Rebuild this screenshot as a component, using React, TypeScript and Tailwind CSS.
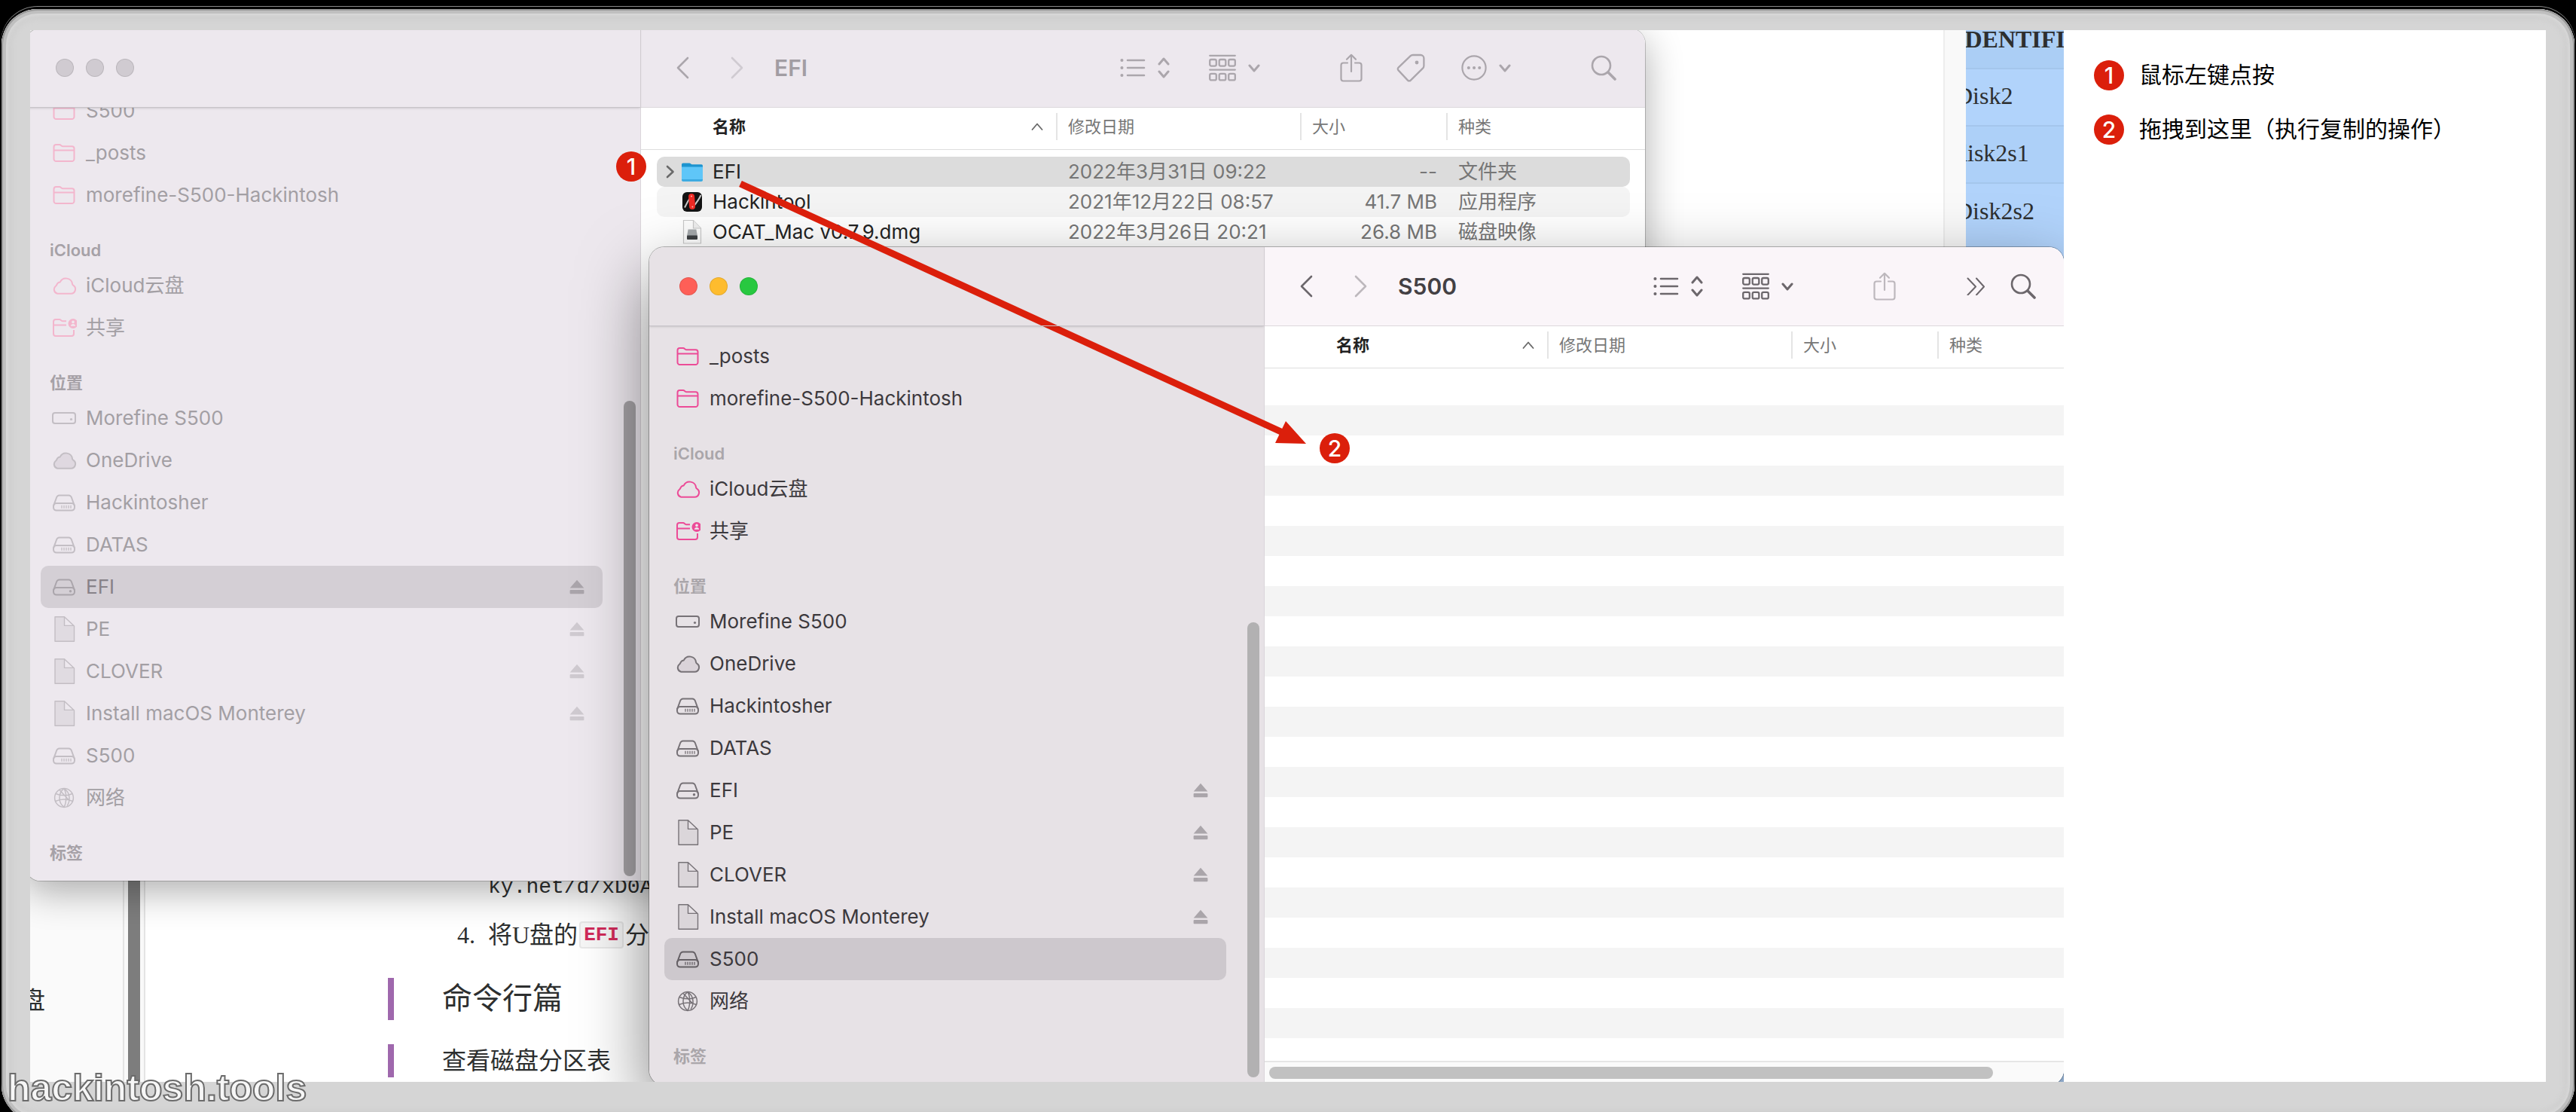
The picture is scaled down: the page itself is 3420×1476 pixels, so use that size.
import React from "react";

type IconName = "folder" | "cloud" | "cloudFilled" | "shared" | "internal" | "drive" | "driveDot" | "doc" | "globe";
type Item = { label: string; icon: IconName; pink?: boolean; eject?: boolean };
type Section = { title?: string; items: Item[] };

const favourites: Item[] = [
  { label: "_posts", icon: "folder", pink: true },
  { label: "morefine-S500-Hackintosh", icon: "folder", pink: true },
];

const commonSections: Section[] = [
  {
    title: "iCloud",
    items: [
      { label: "iCloud云盘", icon: "cloud", pink: true },
      { label: "共享", icon: "shared", pink: true },
    ],
  },
  {
    title: "位置",
    items: [
      { label: "Morefine S500", icon: "internal" },
      { label: "OneDrive", icon: "cloudFilled" },
      { label: "Hackintosher", icon: "drive" },
      { label: "DATAS", icon: "drive" },
      { label: "EFI", icon: "driveDot", eject: true },
      { label: "PE", icon: "doc", eject: true },
      { label: "CLOVER", icon: "doc", eject: true },
      { label: "Install macOS Monterey", icon: "doc", eject: true },
      { label: "S500", icon: "drive" },
      { label: "网络", icon: "globe" },
    ],
  },
  { title: "标签", items: [] },
];

const backSections: Section[] = [
  { items: [{ label: "S500", icon: "folder", pink: true }, ...favourites] },
  ...commonSections,
];
const frontSections: Section[] = [{ items: favourites }, ...commonSections];

function SidebarIcon({ name }: { name: IconName }) {
  return (
    <svg viewBox="0 0 34 34" className="size-[34px] shrink-0" fill="none" stroke="currentColor" strokeWidth="2" strokeLinejoin="round" aria-hidden="true">
      {name === "folder" && (
        <path d="M3.5 9a3 3 0 0 1 3-3h4.6c1.6 0 2.2 2.2 4 2.2h12.4a3 3 0 0 1 3 3V25a3 3 0 0 1-3 3h-21a3 3 0 0 1-3-3zM3.5 13.6h27" />
      )}
      {(name === "cloud" || name === "cloudFilled") && (
        <path
          d="M8.2 27.8h18a6 6 0 0 0 3-11.1c-.6-.4-1-.8-1.1-1.6a8.6 8.6 0 0 0-16.3-2.7 5 5 0 0 0-4.4 3.4c-.2.8-.6 1.2-1.2 1.7a5.8 5.8 0 0 0 2 10.3z"
          fill={name === "cloudFilled" ? "rgba(120,110,120,0.12)" : "none"}
        />
      )}
      {name === "shared" && (
        <>
          <path d="M20 8.2h-5c-1.8 0-2.4-2.2-4-2.2H6a3 3 0 0 0-3 3v16a3 3 0 0 0 3 3h21a3 3 0 0 0 3-3v-5M3 13.6h17" />
          <circle cx="29" cy="11.5" r="6.5" fill="currentColor" stroke="none" />
          <circle cx="29" cy="9.4" r="1.8" fill="#efe8ee" stroke="none" />
          <path d="M25.8 14.8c.3-2 1.6-2.9 3.2-2.9s2.9.9 3.2 2.9z" fill="#efe8ee" stroke="none" />
        </>
      )}
      {name === "internal" && (
        <>
          <rect x="2" y="10" width="30" height="14" rx="3" />
          <circle cx="26.5" cy="18.5" r="1.6" fill="currentColor" stroke="none" />
        </>
      )}
      {(name === "drive" || name === "driveDot") && (
        <>
          <path d="M3 21.5 7.2 10a4 4 0 0 1 3.6-2.6h12.4a4 4 0 0 1 3.6 2.6L31 21.5" />
          <rect x="3" y="18" width="28" height="9.6" rx="4" />
          {name === "drive" ? <path d="M14 20.8v4M17 20.8v4M20 20.8v4M23 20.8v4M26 20.8v4" strokeWidth="1.3" /> : <circle cx="25.5" cy="22.8" r="1.7" fill="currentColor" stroke="none" />}
        </>
      )}
      {name === "doc" && (
        <path d="M5 .8h12.5L30.5 13v20.2H5zM17.5.8v11.6h13" strokeWidth="1.4" fill="rgba(120,110,120,0.10)" />
      )}
      {name === "globe" && (
        <g strokeWidth="1.5">
          <circle cx="17" cy="17" r="12.4" />
          <path d="M17 4.6c-8 6-8 19 0 24.8M17 4.6c3.6 6 3.6 18 0 24.8M17 4.6c8 5 9 16 4 23M6 11.5c7 3 16 3 22 0M5.5 21.5c7-3 16-3 23 0M11 6.5l12 13" />
        </g>
      )}
    </svg>
  );
}

const Eject = () => (
  <svg viewBox="0 0 20 20" className="size-5" fill="currentColor" aria-hidden="true">
    <path d="M10 .8 19.3 11.6H.7z" />
    <rect x=".6" y="14" width="18.8" height="5.2" rx="1" />
  </svg>
);

const ChevronLeft = () => (
  <svg viewBox="0 0 36 36" className="size-9" fill="none" stroke="currentColor" strokeWidth="2.6" strokeLinecap="round" strokeLinejoin="round" aria-hidden="true">
    <path d="M25 5 12 18l13 13" />
  </svg>
);
const ChevronRight = () => (
  <svg viewBox="0 0 36 36" className="size-9" fill="none" stroke="currentColor" strokeWidth="2.6" strokeLinecap="round" strokeLinejoin="round" aria-hidden="true">
    <path d="m12 5 13 13-13 13" />
  </svg>
);
const ChevronDown = () => (
  <svg viewBox="0 0 16 16" className="size-4" fill="none" stroke="currentColor" strokeWidth="3" strokeLinecap="round" strokeLinejoin="round" aria-hidden="true">
    <path d="m2 5 6 7 6-7" />
  </svg>
);
const UpDown = () => (
  <svg viewBox="0 0 16 28" className="h-7 w-4" fill="none" stroke="currentColor" strokeWidth="3" strokeLinecap="round" strokeLinejoin="round" aria-hidden="true">
    <path d="m2 9 6-7 6 7M2 19l6 7 6-7" />
  </svg>
);
const ListIcon = () => (
  <svg viewBox="0 0 34 28" className="h-7 w-[34px]" fill="none" stroke="currentColor" strokeWidth="2.6" strokeLinecap="round" aria-hidden="true">
    <path d="M10 4h22M10 14h22M10 24h22" />
    <path d="M2.4 4h.1M2.4 14h.1M2.4 24h.1" strokeWidth="4" />
  </svg>
);
const GroupIcon = () => (
  <svg viewBox="0 0 36 36" className="size-9" fill="none" stroke="currentColor" strokeWidth="2.3" strokeLinecap="round" aria-hidden="true">
    <path d="M1.2 1.8h33.6M1.2 20.6h33.6" />
    {[1.2, 13.7, 26.2].map((x) => (
      <g key={x}>
        <rect x={x} y="7" width="8.6" height="8.6" rx="2" />
        <rect x={x} y="25.8" width="8.6" height="8.6" rx="2" />
      </g>
    ))}
  </svg>
);
const ShareIcon = () => (
  <svg viewBox="0 0 30 38" className="h-[38px] w-[30px]" fill="none" stroke="currentColor" strokeWidth="2.2" strokeLinecap="round" strokeLinejoin="round" aria-hidden="true">
    <path d="M10 12.5H4.5a3 3 0 0 0-3 3v18a3 3 0 0 0 3 3h21a3 3 0 0 0 3-3v-18a3 3 0 0 0-3-3H20M15 24V1.8M9 7.8l6-6 6 6" />
  </svg>
);
const TagIcon = () => (
  <svg viewBox="0 0 38 38" className="size-[38px]" fill="none" stroke="currentColor" strokeWidth="2.3" strokeLinejoin="round" aria-hidden="true">
    <path d="M2.6 18.6 18.4 3.4A5 5 0 0 1 21.8 2H32a4.4 4.4 0 0 1 4.4 4.4v9.8a5 5 0 0 1-1.4 3.4L18.8 35.6a2.6 2.6 0 0 1-3.8 0L2.6 22.4a2.6 2.6 0 0 1 0-3.8z" />
    <circle cx="27" cy="12" r="2.4" fill="currentColor" stroke="none" />
  </svg>
);
const MoreIcon = () => (
  <svg viewBox="0 0 34 34" className="size-[34px]" fill="none" stroke="currentColor" strokeWidth="2.2" strokeLinecap="round" aria-hidden="true">
    <circle cx="17" cy="17" r="15.6" />
    <path d="M9.8 17h.1M17 17h.1M24.2 17h.1" strokeWidth="4" />
  </svg>
);
const DoubleChevron = () => (
  <svg viewBox="0 0 24 24" className="size-6" fill="none" stroke="currentColor" strokeWidth="2" strokeLinecap="round" strokeLinejoin="round" aria-hidden="true">
    <path d="m1.5 1.5 10.5 11-10.5 11M13 1.5l10 11-10 11" />
  </svg>
);
const SearchIcon = () => (
  <svg viewBox="0 0 34 34" className="size-[34px]" fill="none" stroke="currentColor" strokeWidth="2.6" strokeLinecap="round" aria-hidden="true">
    <circle cx="14" cy="14" r="12" />
    <path d="m23 23 9 9" strokeWidth="3.6" />
  </svg>
);
const SortCaret = () => (
  <svg viewBox="0 0 16 10" className="h-2.5 w-4" fill="none" stroke="#6a6a6a" strokeWidth="1.8" strokeLinecap="round" strokeLinejoin="round" aria-hidden="true">
    <path d="m1.5 9 6.5-7.5L14.5 9" />
  </svg>
);

const FolderFile = () => (
  <svg viewBox="0 0 30 30" className="size-[30px]" aria-hidden="true">
    <path d="M1 5.2A1.8 1.8 0 0 1 2.8 3.4h8.4c.8 0 1.2.4 1.8.9.8.7 1.4 1 2.4 1h11.8A1.8 1.8 0 0 1 29 7.1V12H1z" fill="#1d94cf" />
    <path d="M1 8.6h28v17.2a2 2 0 0 1-2 2H3a2 2 0 0 1-2-2z" fill="#5fc6f8" />
    <path d="M1 25v.8a2 2 0 0 0 2 2h24a2 2 0 0 0 2-2V25z" fill="#3aa9e0" />
  </svg>
);
const HackintoolFile = () => (
  <svg viewBox="0 0 30 30" className="size-[30px]" aria-hidden="true">
    <rect x="2" y="2" width="26" height="26" rx="6" fill="#141414" />
    <path d="M5 22.5C8 16 11 11 14 7M16 22c4-5 8-10 10.5-16" stroke="#c9c9c9" strokeWidth="2" fill="none" />
    <rect x="10.6" y="4" width="8" height="21" rx="4" fill="#ee2a24" transform="rotate(-4 15 15)" />
    <circle cx="14" cy="7.5" r="1" fill="#ffb3ae" />
    <circle cx="15.4" cy="21.5" r="1" fill="#ffb3ae" />
  </svg>
);
const DmgFile = () => (
  <svg viewBox="0 0 30 34" className="h-[34px] w-[30px]" aria-hidden="true">
    <path d="M3.5 1.5h13L26.5 12v20h-23z" fill="#fdfdfd" stroke="#c9c9c9" strokeWidth="1.2" />
    <path d="M16.5 1.5V12h10" fill="#efefef" stroke="#c9c9c9" strokeWidth="1.2" />
    <path d="M9.6 13.5h10.8l1.6 9H8z" fill="#a5a9ac" />
    <rect x="8" y="21.6" width="14" height="5.4" rx="1" fill="#3d4043" />
  </svg>
);

const palettes = {
  back: {
    bar: "bg-[#ede8ee]",
    side: "bg-[#ede8ee]",
    text: "text-[#a39fa4]",
    selectedText: "text-[#878288]",
    selected: "bg-[#d4cfd5]",
    heading: "text-[#a6a1a7]",
    pink: "text-[#f3b6cd]",
    icon: "text-[#c3bec4]",
    selectedIcon: "text-[#aaa5ab]",
    eject: "text-[#cfcad0]",
    tool: "text-[#aba6ac]",
    faint: "text-[#d0cbd1]",
    title: "text-[#a29da3]",
    thumb: "bg-[#a5a2a5]",
  },
  front: {
    bar: "bg-[#faf5f9]",
    side: "bg-[#e7e2e6]",
    text: "text-[#3c393d]",
    selectedText: "text-[#3c393d]",
    selected: "bg-[#cdc8cd]",
    heading: "text-[#aaa6aa]",
    pink: "text-[#ec4b97]",
    icon: "text-[#777277]",
    selectedIcon: "text-[#656065]",
    eject: "text-[#aaa5aa]",
    tool: "text-[#6c676c]",
    faint: "text-[#bdb8bd]",
    title: "text-[#434044]",
    thumb: "bg-[#b2b1b2]",
  },
};
type Palette = (typeof palettes)["back"];

function Sidebar({ sections, selected, palette, lights, listClass, thumbClass }: { sections: Section[]; selected: string; palette: Palette; lights: string[]; listClass: string; thumbClass: string }) {
  return (
    <aside className={`flex w-[817px] shrink-0 flex-col border-r border-[#dad5da] ${palette.side}`}>
      <div className="z-10 flex h-[105px] shrink-0 items-center gap-4 border-b border-[#c9c5ca] px-10 shadow-sm">
        {["关闭", "最小化", "缩放"].map((name, i) => (
          <button key={name} type="button" aria-label={name} className={`size-6 rounded-full border border-black/10 ${lights[i]}`} />
        ))}
      </div>
      <div className="flex min-h-0 flex-1 overflow-hidden">
        <nav className={`min-w-0 flex-1 pr-7 pl-5 ${listClass}`}>
          {sections.map((section, s) => (
            <section key={s}>
              {section.title && <h2 className={`h-16 pt-7 pl-3 text-[22px] leading-[34px] font-semibold ${palette.heading}`}>{section.title}</h2>}
              {section.items.map((item, i) => {
                const on = item.label === selected && !item.pink;
                return (
                  <div key={i} className={`flex h-14 items-center rounded-[10px] pr-6 pl-[14px] ${on ? palette.selected : ""}`}>
                    <button type="button" className={`flex flex-1 items-center gap-3 text-left text-[26px] leading-9 ${on ? palette.selectedText : palette.text}`}>
                      <span className={item.pink ? palette.pink : on ? palette.selectedIcon : palette.icon}>
                        <SidebarIcon name={item.icon} />
                      </span>
                      {item.label}
                    </button>
                    {item.eject && (
                      <button type="button" aria-label={`推出 ${item.label}`} className={on ? palette.selectedIcon : palette.eject}>
                        <Eject />
                      </button>
                    )}
                  </div>
                );
              })}
            </section>
          ))}
        </nav>
        <div className="mr-[6px] flex w-4 flex-col justify-end">
          <div className={`rounded-full ${palette.thumb} ${thumbClass}`} />
        </div>
      </div>
    </aside>
  );
}

function Tool({ label, children, className = "" }: { label: string; children: React.ReactNode; className?: string }) {
  return (
    <button type="button" aria-label={label} className={`flex items-center gap-4 ${className}`}>
      {children}
    </button>
  );
}

function Toolbar({ title, palette, compact }: { title: string; palette: Palette; compact?: boolean }) {
  return (
    <header className={`flex h-[105px] shrink-0 items-center border-b border-[#dcd8dc] pl-[37px] ${compact ? "pr-[37px]" : "pr-[38px]"} ${palette.bar} ${palette.tool}`}>
      <Tool label="后退">
        <ChevronLeft />
      </Tool>
      <Tool label="前进" className={`ml-9 ${palette.faint}`}>
        <ChevronRight />
      </Tool>
      <h1 className={`ml-8 flex-1 text-[30px] leading-9 font-semibold ${palette.title}`}>{title}</h1>
      <Tool label="显示方式">
        <ListIcon />
        <UpDown />
      </Tool>
      <Tool label="分组" className="ml-[52px]">
        <GroupIcon />
        <ChevronDown />
      </Tool>
      <Tool label="共享" className={compact ? `ml-[106px] ${palette.faint}` : "ml-[106px]"}>
        <ShareIcon />
      </Tool>
      {compact ? (
        <Tool label="更多工具栏项目" className="ml-[94px]">
          <DoubleChevron />
        </Tool>
      ) : (
        <>
          <Tool label="标签" className="ml-[45px]">
            <TagIcon />
          </Tool>
          <Tool label="更多" className="ml-[48px]">
            <MoreIcon />
            <ChevronDown />
          </Tool>
        </>
      )}
      <Tool label="搜索" className={compact ? "ml-[34px]" : "ml-[106px]"}>
        <SearchIcon />
      </Tool>
    </header>
  );
}

function ColumnHeads() {
  return (
    <thead className="text-left align-top text-[22px] leading-9 text-[#777777]">
      <tr className="h-[55px] [&>th]:border-b [&>th]:border-[#dedede] [&>th]:p-0 [&>th]:pt-[7px]">
        <td className="border-b border-[#dedede]" />
        <th scope="col" className="font-semibold text-[#222222]">
          <span className="flex items-center justify-between pr-[17px] pl-[74px]">
            名称
            <SortCaret />
          </span>
        </th>
        {["修改日期", "大小", "种类"].map((name) => (
          <th key={name} scope="col" className="font-normal">
            <span className="block border-l-2 border-[#e4e4e4] pl-[14px]">{name}</span>
          </th>
        ))}
        <td className="border-b border-[#dedede]" />
      </tr>
      <tr className="h-2.5" />
    </thead>
  );
}

const files = [
  { name: "EFI", date: "2022年3月31日 09:22", size: "--", kind: "文件夹", icon: <FolderFile />, row: "bg-[#dcdcdc]", open: true },
  { name: "Hackintool", date: "2021年12月22日 08:57", size: "41.7 MB", kind: "应用程序", icon: <HackintoolFile />, row: "bg-[#f4f4f4]" },
  { name: "OCAT_Mac v0.7.9.dmg", date: "2022年3月26日 20:21", size: "26.8 MB", kind: "磁盘映像", icon: <DmgFile />, row: "bg-white" },
];

function BackWindow() {
  return (
    <section aria-label="EFI" className="absolute -top-0.5 -left-1.5 flex w-[2150px] overflow-hidden rounded-[20px] shadow-[0_0_0_1px_rgba(0,0,0,0.2),0_14px_50px_rgba(0,0,0,0.32)]">
      <Sidebar
        sections={backSections}
        selected="EFI"
        palette={palettes.back}
        lights={["bg-[#d0cbd1]", "bg-[#d0cbd1]", "bg-[#d0cbd1]"]}
        listClass="-mt-6 pb-[18px]"
        thumbClass="mb-1.5 h-[631px]"
      />
      <div className="flex min-w-0 flex-1 flex-col bg-white">
        <Toolbar title="EFI" palette={palettes.back} />
        <table className="w-full table-fixed border-collapse">
          <colgroup>
            <col className="w-[21px]" />
            <col className="w-[530px]" />
            <col className="w-[324px]" />
            <col className="w-[194px]" />
            <col />
            <col className="w-5" />
          </colgroup>
          <ColumnHeads />
          <tbody className="text-[26px] leading-10 text-[#767676]">
            {files.map((f) => (
              <tr key={f.name} className="h-10">
                <td className="p-0" />
                <td className={`rounded-l-[10px] p-0 text-[#232323] ${f.row}`}>
                  <span className="flex h-10 items-center">
                    <span className="flex w-[32px] justify-center pl-1 text-[#6a6a6a]">
                      {f.open && (
                        <svg viewBox="0 0 12 18" className="h-[18px] w-3" fill="none" stroke="currentColor" strokeWidth="2.6" strokeLinecap="round" strokeLinejoin="round" aria-hidden="true">
                          <path d="m2 2 7.5 7L2 16" />
                        </svg>
                      )}
                    </span>
                    {f.icon}
                    <span className="pl-3">{f.name}</span>
                  </span>
                </td>
                <td className={`p-0 pl-4 whitespace-nowrap ${f.row}`}>{f.date}</td>
                <td className={`p-0 pr-3 text-right ${f.row}`}>{f.size}</td>
                <td className={`rounded-r-[10px] p-0 pl-4 ${f.row}`}>{f.kind}</td>
                <td className="p-0" />
              </tr>
            ))}
          </tbody>
        </table>
      </div>
    </section>
  );
}

function FrontWindow() {
  return (
    <section aria-label="S500" className="absolute top-[288px] right-0 -bottom-1 left-[822px] flex overflow-hidden rounded-[20px] shadow-[0_0_0_1px_rgba(0,0,0,0.28),0_36px_90px_rgba(0,0,0,0.5)]">
      <Sidebar
        sections={frontSections}
        selected="S500"
        palette={palettes.front}
        lights={["bg-[#fe5f57]", "bg-[#febc2e]", "bg-[#28c840]"]}
        listClass="pt-3"
        thumbClass="mb-2.5 h-[604px]"
      />
      <div className="flex min-w-0 flex-1 flex-col bg-white">
        <Toolbar title="S500" palette={palettes.front} compact />
        <div className="min-h-0 flex-1 overflow-hidden">
          <table className="w-full table-fixed border-collapse">
            <colgroup>
              <col className="w-[21px]" />
              <col className="w-[354px]" />
              <col className="w-[324px]" />
              <col className="w-[194px]" />
              <col />
              <col className="w-5" />
            </colgroup>
            <ColumnHeads />
            <tbody>
              {Array.from({ length: 23 }, (_, i) => (
                <tr key={i} className="h-10 even:bg-[#f4f4f4]">
                  <td colSpan={6} className="p-0" />
                </tr>
              ))}
            </tbody>
          </table>
        </div>
        <div className="h-8 shrink-0 border-t-2 border-[#e6e6e6] bg-[#fafafa] pt-1.5 pr-[94px] pl-1.5">
          <div className="h-4 rounded-full bg-[#c1c1c1]" />
        </div>
      </div>
    </section>
  );
}

function Article() {
  return (
    <article className="absolute inset-0 flex justify-between font-['Liberation_Serif','Noto_Sans_CJK_SC',serif] text-[32px] leading-[44px] text-[#2d2f2f]">
      <div className="flex items-end">
        <div className="flex h-full w-[123px] items-end bg-[#fafafa]">
          <p className="-ml-3 pb-[86px]">盘</p>
        </div>
        <div className="h-full w-[30px] border-x-2 border-[#e4e4e4] bg-[#f9f9f9] px-[5px]">
          <div className="h-full bg-[#7d7d7d]" />
        </div>
        <div className="flex w-[700px] flex-col pb-1.5 pl-[322px] whitespace-nowrap">
          <ol start={4} className="pl-[133px]">
            <li className="font-['Liberation_Mono',monospace] text-[28px]">ky.net/d/xD0A</li>
            <li className="mt-[19px] mb-[35px] flex items-center">
              <span className="-ml-[41px] w-[41px]">4.</span>
              将U盘的
              <code className="mx-0.5 rounded border-2 border-[#e8e8e8] bg-[#f6f6f6] px-1 font-['Liberation_Mono',monospace] text-[26px] leading-8 font-bold text-[#d12c5a]">EFI</code>分
            </li>
          </ol>
          <h2 className="border-l-8 border-[#9f68ad] pl-16 text-[40px] leading-[56px]">命令行篇</h2>
          <h3 className="mt-8 border-l-8 border-[#9f68ad] pl-16 text-[32px]">查看磁盘分区表</h3>
        </div>
      </div>
      <div className="flex">
        <div className="w-[30px] border-l-2 border-[#ededed] bg-[#f9f9f9]" />
        <div className="w-[130px] overflow-hidden bg-[#b1d3fb]">
          <table className="-ml-3.5 w-[220px] border-collapse">
            <thead>
              <tr className="h-[51px] bg-[#abcef5]">
                <th className="p-0 text-left align-top leading-6 font-bold">IDENTIFIER</th>
              </tr>
            </thead>
            <tbody>
              {["Disk2", "disk2s1", "Disk2s2"].map((id) => (
                <tr key={id} className="h-[76px] border-t-2 border-[#a4c6ec] even:bg-[#add0f8]">
                  <td className="p-0 pb-1">{id}</td>
                </tr>
              ))}
            </tbody>
          </table>
        </div>
      </div>
    </article>
  );
}

function Badge({ n, className = "" }: { n: number; className?: string }) {
  return <span className={`flex size-10 shrink-0 items-center justify-center rounded-full bg-[#db1f0b] text-[30px] leading-10 font-medium text-white ${className}`}>{n}</span>;
}

function DragArrow() {
  return (
    <svg viewBox="0 0 760 360" className="absolute top-[200px] left-[940px] h-[360px] w-[760px]" aria-hidden="true">
      <path d="M3 4 725 335" stroke="#db1f0b" strokeWidth="9" />
      <path d="M727 319 754 349 713 348z" fill="#db1f0b" stroke="none" />
    </svg>
  );
}

export default function App() {
  return (
    <div className="flex h-screen overflow-hidden bg-black px-0.5 pt-3 font-['Inter','Noto_Sans_CJK_SC',sans-serif]">
      <div className="relative -mb-3 flex min-w-0 flex-1 rounded-[48px] bg-[#d5d5d5] px-[38px] pt-7 pb-[52px] shadow-[0_-2px_0_1px_#000,0_-3px_0_1px_#888,inset_0_0_0_2px_#999,inset_0_0_0_6px_#bfbfbf,inset_0_0_5px_8px_#dadada,inset_0_0_6px_14px_#cfcfcf]">
        <main className="flex min-w-0 flex-1 overflow-hidden bg-white">
          <div className="relative min-w-0 flex-1 overflow-hidden">
            <Article />
            <BackWindow />
            <FrontWindow />
            <DragArrow />
            <Badge n={1} className="absolute top-[161px] left-[778px]" />
            <Badge n={2} className="absolute top-[535px] left-[1712px]" />
          </div>
          <ol className="flex w-[640px] shrink-0 flex-col gap-8 bg-white pt-10 pl-10 text-[30px] leading-[38px] text-black">
            <li className="flex h-10 items-start gap-5">
              <Badge n={1} />
              鼠标左键点按
            </li>
            <li className="flex h-10 items-start gap-5">
              <Badge n={2} />
              拖拽到这里（执行复制的操作）
            </li>
          </ol>
        </main>
        <p className="absolute bottom-4 left-2 font-['Liberation_Sans',sans-serif] text-[50px] leading-[56px] font-bold text-[#f6f6f6] [-webkit-text-stroke:2px_#6b6b6b]">hackintosh.tools</p>
      </div>
    </div>
  );
}
